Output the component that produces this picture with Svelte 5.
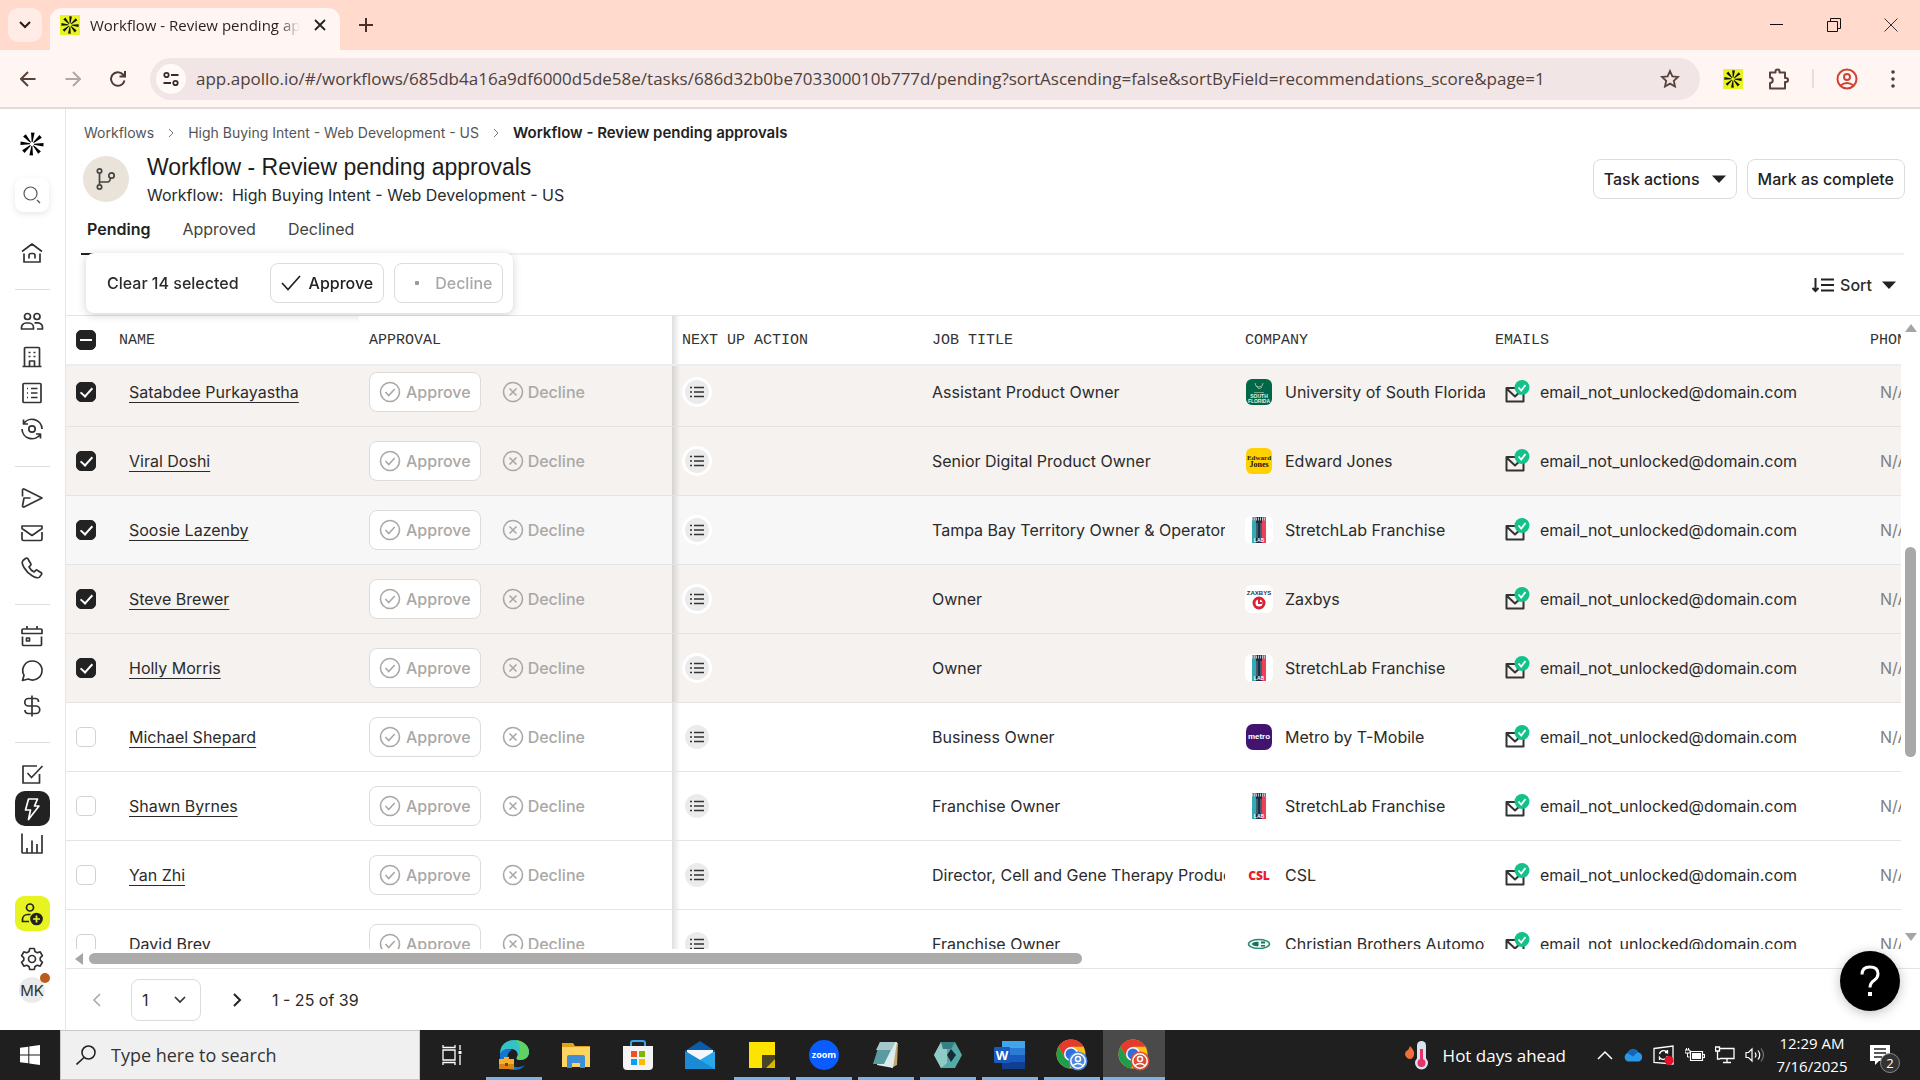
<script>
  import { onMount } from 'svelte';

  let scroller = $state();

  const url = 'app.apollo.io/#/workflows/685db4a16a9df6000d5de58e/tasks/686d32b0be703300010b777d/pending?sortAscending=false&sortByField=recommendations_score&page=1';

  const navGroups = [
    ['people', 'building', 'list', 'sync'],
    ['send', 'mail', 'phone'],
    ['calendar', 'chat', 'dollar'],
    ['tasks', 'bolt', 'chart']
  ];

  // stroke paths, 24x24
  const icons = {
    home: 'M2 10.500 12 3l10 7.500M4 12.500v8.500h16v-8.500M9 17.500V14.500a2 2 0 0 1 2-2h2a2 2 0 0 1 2 2v3',
    people: 'M7.500 10.500a3 3 0 1 0 0-6 3 3 0 0 0 0 6ZM17 10.500a3 3 0 1 0 0-6 3 3 0 0 0 0 6ZM1.500 20h12v-1.500a4.500 4.500 0 0 0-4.500-4.500H6a4.500 4.500 0 0 0-4.500 4.500ZM14.500 13.800h3.500a4.500 4.500 0 0 1 4.500 4.500V20H17',
    building: 'M2.500 21.500h19M4.500 21.500v-18a1 1 0 0 1 1-1h13a1 1 0 0 1 1 1v18M9.500 21.500v-5.500h5v5.500M8.500 7.500h2M13.500 7.500h2M8.500 11.500h2M13.500 11.500h2',
    list: 'M4 2.500h16a1 1 0 0 1 1 1v17a1 1 0 0 1-1 1H4a1 1 0 0 1-1-1v-17a1 1 0 0 1 1-1ZM7 7.500h1M11 7.500h6.500M7 12h1M11 12h6.500M7 16.500h1M11 16.500h6.500',
    sync: 'M12 15.200a3.200 3.200 0 1 0 0-6.400 3.200 3.200 0 0 0 0 6.400ZM3.500 2.500v4.500H8M3.500 7a10 10 0 0 1 18.500 5M20.500 21.500V17H16M20.500 17A10 10 0 0 1 2 12',
    send: 'M2.500 10.500V4a1 1 0 0 1 1.500-.900L22 12 4 20.900A1 1 0 0 1 2.500 20l1.500-8h6.500',
    mail: 'M2 7.500V5h20v2.500L12 14.500 2 7.500ZM2 11v7a1.500 1.500 0 0 0 1.500 1.500h17A1.500 1.500 0 0 0 22 18v-7',
    phone: 'M5.500 2.500 3 4.500c-1 1-1 3.500 1 7 2 3.500 5 6.500 8.500 8.500 3.500 2 6 2 7 1l2-2.500a1.200 1.200 0 0 0-.300-1.700l-4-2.600a1.200 1.200 0 0 0-1.500.200l-1.500 1.600c-2.200-1-4.200-3-5.200-5.200l1.600-1.500a1.200 1.200 0 0 0 .200-1.500L8 3a1.500 1.500 0 0 0-2.500-.500Z',
    calendar: 'M2 9.500V6a1 1 0 0 1 1-1h18a1 1 0 0 1 1 1v3.500ZM7 5V2M17 5V2M2.500 12.500v8a1 1 0 0 0 1 1h17a1 1 0 0 0 1-1v-8M6.500 14h3v3h-3Z',
    chat: 'M12.500 2a9.500 9.500 0 1 1-4.200 18L2.500 21.500 4 16.200A9.500 9.500 0 0 1 12.500 2Z',
    dollar: 'M12 1.500v21M18.500 8V7.500a3 3 0 0 0-3-3h-7a3.700 3.700 0 0 0 0 7.500h7.500a3.700 3.700 0 0 1 0 7.500h-8a3 3 0 0 1-3-3V16',
    tasks: 'M17 4H3v17h16.500V12M7.500 11l4 4.500L22.500 4',
    bolt: 'M8.500 2h9l-3 7h4.500L8.500 22.500l2-9.500H5.500Z',
    chart: 'M2 1.500v18.500a1 1 0 0 0 1 1h19V3M7 21v-5M12 21V8.500M17 21v-9'
  };

  const rows = [
    { name: 'Satabdee Purkayastha', title: 'Assistant Product Owner', company: 'University of South Florida', logo: 'usf', selected: true },
    { name: 'Viral Doshi', title: 'Senior Digital Product Owner', company: 'Edward Jones', logo: 'edward', selected: true },
    { name: 'Soosie Lazenby', title: 'Tampa Bay Territory Owner & Operator', company: 'StretchLab Franchise', logo: 'stretch', selected: true, hovered: true },
    { name: 'Steve Brewer', title: 'Owner', company: 'Zaxbys', logo: 'zaxbys', selected: true },
    { name: 'Holly Morris', title: 'Owner', company: 'StretchLab Franchise', logo: 'stretch', selected: true },
    { name: 'Michael Shepard', title: 'Business Owner', company: 'Metro by T-Mobile', logo: 'metro' },
    { name: 'Shawn Byrnes', title: 'Franchise Owner', company: 'StretchLab Franchise', logo: 'stretch' },
    { name: 'Yan Zhi', title: 'Director, Cell and Gene Therapy Product', company: 'CSL', logo: 'csl' },
    { name: 'David Brey', title: 'Franchise Owner', company: 'Christian Brothers Automotive', logo: 'cba' }
  ];

  const apps = [
    { id: 'edge', open: true },
    { id: 'explorer' },
    { id: 'store' },
    { id: 'mailapp' },
    { id: 'sticky', open: true },
    { id: 'zoom', open: true },
    { id: 'notepad', open: true },
    { id: 'hex', open: true },
    { id: 'word', open: true },
    { id: 'chrome', open: true },
    { id: 'chrome2', open: true, active: true }
  ];

  onMount(() => {
    scroller.scrollTop = 8;
  });
</script>

{#snippet burst(size)}
  <svg width={size} height={size} viewBox="0 0 24 24" fill="currentColor" aria-hidden="true">
    {#each [0, 45, 90, 135, 180, 225, 270, 315] as angle}
      <path d="M10.200.500h3.600l-1.300 9.500h-1Z" transform="rotate({angle + 4} 12 12)" />
    {/each}
  </svg>
{/snippet}

{#snippet icon(name, size = 24)}
  <svg width={size} height={size} viewBox="0 0 24 24" fill="none" stroke="currentColor" stroke-width="1.700" stroke-linejoin="round" aria-hidden="true">
    <path d={icons[name]} />
  </svg>
{/snippet}

{#snippet caret()}
  <svg width="14" height="8" viewBox="0 0 14 8" aria-hidden="true"><path d="M0 .5h14L7 8Z" fill="#222" /></svg>
{/snippet}

{#snippet logo(name)}
  <svg class="logo" width="28" height="28" viewBox="0 0 28 28" aria-hidden="true">
    {#if name === 'usf'}
      <rect x="1" y="1" width="26" height="26" rx="6" fill="#006747" />
      <path d="M10 5q0 4 4 4t4-4M11 8l3 3 3-2" fill="none" stroke="#8fb5a3" />
      <path d="M9 14.500h10" stroke="#6fa58d" />
      <text x="14" y="20" class="tiny" fill="#e5efe9">SOUTH</text>
      <text x="14" y="25" class="tiny" fill="#e5efe9">FLORIDA</text>
    {:else if name === 'edward'}
      <rect x="1" y="1" width="26" height="26" rx="6" fill="#ffd100" />
      <text x="14" y="13" class="serif" fill="#222">Edward</text>
      <text x="14" y="20" class="serif heavy" fill="#111">Jones</text>
    {:else if name === 'stretch'}
      <rect width="28" height="28" rx="6" fill="#fff" />
      <path d="M7 1h4v26H7Z" fill="#35a9b5" />
      <path d="M11 1h6v26h-6Z" fill="#183041" />
      <path d="M17 1h4v26h-4Z" fill="#ee4056" />
      <path d="M7 3h14" stroke="#b9c4ca" stroke-width="3" stroke-dasharray="1 1" />
      <path d="M12 7v15M16 7v15" stroke="#718c9b" />
      <text x="14" y="26" class="tiny" fill="#fff">LAB</text>
    {:else if name === 'zaxbys'}
      <rect width="28" height="28" rx="6" fill="#fff" />
      <text x="14" y="10" class="small" fill="#17345b">ZAXBYS</text>
      <circle cx="14" cy="18" r="5" fill="none" stroke="#dc2036" stroke-width="3" />
      <path d="M14 12v6h3" fill="none" stroke="#dc2036" stroke-width="2" />
    {:else if name === 'metro'}
      <rect x="1" y="1" width="26" height="26" rx="7" fill="#43146f" />
      <text x="14" y="16" class="brand" fill="#fff">metro</text>
    {:else if name === 'csl'}
      <text x="14" y="19" class="csl" fill="#e9202c">CSL</text>
    {:else}
      <ellipse cx="14" cy="14" rx="10.500" ry="4.500" fill="#eef7f3" stroke="#2b8a72" stroke-width="1.500" />
      <path d="M6.500 14q3-3 7-2v4q-4 1-7-2ZM16 11.500h4v2h-4ZM16 15h4v1.500h-4Z" fill="#17725a" />
    {/if}
  </svg>
{/snippet}

{#snippet chromeMark(badge)}
  <svg width="34" height="32" viewBox="0 0 34 32">
    <circle cx="16" cy="15" r="14.500" fill="#fbc116" />
    <path d="M3.400 7.800A14.500 14.500 0 0 1 28.600 7.800H16L9.700 18.600Z" fill="#e33b2e" />
    <path d="M3.400 7.800 9.700 18.600 16 22l-1.500 7.400A14.500 14.500 0 0 1 3.400 7.800Z" fill="#1e9e4a" />
    <circle cx="16" cy="15" r="7" fill="#fff" />
    <circle cx="16" cy="15" r="5.500" fill="#2c6fe0" />
    <circle cx="23" cy="22" r="9.500" fill={badge} />
    <circle cx="23" cy="22" r="7.200" fill="none" stroke="#fff" stroke-width="1.500" />
    <circle cx="23" cy="20" r="2.500" fill="none" stroke="#fff" stroke-width="1.500" />
    <path d="M18 26.500q5-4 10 0" fill="none" stroke="#fff" stroke-width="1.500" />
  </svg>
{/snippet}

{#snippet appIcon(id)}
  {#if id === 'edge'}
    <svg width="32" height="32" viewBox="0 0 32 32">
      <path d="M2 15C2 6 8 1 16 1s15 5 15 12c0 5-4 8-9 8-3 0-4-1-3-3 2-4-1-8-6-8S4 12 2 15Z" fill="#35c1c8" />
      <path d="M18 1c8 1 13 6 13 12 0 5-4 8-9 8-3 0-4-1-3-3 5-5 3-12-1-17Z" fill="#5ed363" />
      <path d="M2 15c2-5 8-6 12-4-5 2-6 9-2 14 4 4 10 4 15 1-3 4-7 5-11 5C7 31 1 24 2 15Z" fill="#1673cf" />
      <path d="M1 20h15v10H1Z" fill="#d98310" />
      <path d="M1 20h15v5H1ZM6 18h5v2H6Z" fill="#f6ae2d" />
      <path d="M7 24h3v3H7Z" fill="#7e4706" />
    </svg>
  {:else if id === 'explorer'}
    <svg width="30" height="28" viewBox="0 0 30 28">
      <path d="M1 2h11l2 3h15v6H1Z" fill="#e0a31f" />
      <path d="M1 6h28v20H1Z" fill="#fdd462" />
      <path d="M6 16q0-2 2-2h14q2 0 2 2v11h-5v-5h-8v5H6Z" fill="#3f8fd8" />
    </svg>
  {:else if id === 'store'}
    <svg width="32" height="32" viewBox="0 0 32 32">
      <path d="M9 8V4q0-2 2-2h10q2 0 2 2v4" fill="none" stroke="#35a7e8" stroke-width="2" />
      <path d="M1 7h30v20q0 4-4 4H5q-4 0-4-4Z" fill="#f4f4f7" />
      <path d="M9 12h6v6H9Z" fill="#f25022" /><path d="M17 12h6v6h-6Z" fill="#7fba00" />
      <path d="M9 20h6v6H9Z" fill="#00a4ef" /><path d="M17 20h6v6h-6Z" fill="#ffb900" />
    </svg>
  {:else if id === 'mailapp'}
    <svg width="32" height="30" viewBox="0 0 32 30">
      <path d="M1 11 16 1l15 10Z" fill="#0b5cab" />
      <path d="M3 10h26v10H3Z" fill="#f3f6fa" />
      <path d="M1 11l15 9 15-9v18H1Z" fill="#28a8ea" />
      <path d="M1 11 31 29H1Z" fill="#1c8bd6" />
    </svg>
  {:else if id === 'sticky'}
    <svg width="28" height="28" viewBox="0 0 28 28">
      <path d="M1 1h26v15L16 27H1Z" fill="#fde300" />
      <path d="M14 14h13v4l-9 9h-4Z" fill="#4b4526" />
      <path d="M27 18v9h-9Z" fill="#d5b800" />
    </svg>
  {:else if id === 'zoom'}
    <svg width="32" height="32" viewBox="0 0 32 32">
      <circle cx="16" cy="16" r="15" fill="#0b5cff" />
      <text x="16" y="19" class="zoomtext" fill="#fff">zoom</text>
    </svg>
  {:else if id === 'notepad'}
    <svg width="32" height="30" viewBox="0 0 32 30">
      <path d="M20 3h8l-1 22-6 3Z" fill="#c3a36b" />
      <path d="M10 2h17l-4 26-16-3Z" fill="#dcebeb" />
      <path d="M10 2h15L14 24H3Z" fill="#5a9ba0" />
      <path d="M10 2h15l-4 8H6Z" fill="#a5c9cb" />
    </svg>
  {:else if id === 'hex'}
    <svg width="30" height="28" viewBox="0 0 30 28">
      <path d="M8 1h14l7 13-7 13H8L1 14Z" fill="#55a9a8" />
      <path d="M8 1 1 14l7 13 6-5V7Z" fill="#8fcac6" />
      <path d="M8 1h14l-4 7h-8Z" fill="#377f82" />
      <path d="m18 8 5 6-5 7-4-7Z" fill="#172a35" />
    </svg>
  {:else if id === 'word'}
    <svg width="32" height="28" viewBox="0 0 32 28">
      <path d="M8 0h23v7H8Z" fill="#41a5ee" /><path d="M8 7h23v7H8Z" fill="#2b7cd3" />
      <path d="M8 14h23v7H8Z" fill="#185abd" /><path d="M8 21h23v7H8Z" fill="#103f91" />
      <rect y="6" width="16" height="16" rx="1" fill="#185abd" />
      <text x="8" y="19" class="word" fill="#fff">W</text>
    </svg>
  {:else if id === 'chrome'}
    {@render chromeMark('#4c86dd')}
  {:else}
    {@render chromeMark('#dc4c33')}
  {/if}
{/snippet}

<div class="screen">
  <header class="tabstrip">
    <button class="tab-search" aria-label="Search tabs">
      <svg width="12" height="8" viewBox="0 0 12 8"><path d="m1 1 5 5 5-5" fill="none" stroke="#2a1a17" stroke-width="2" /></svg>
    </button>
    <div class="browser-tab">
      <span class="favicon">{@render burst(18)}</span>
      <span class="tab-title">Workflow - Review pending approvals</span>
      <button class="plain" aria-label="Close tab">
        <svg width="12" height="12" viewBox="0 0 12 12"><path d="m1 1 10 10M11 1 1 11" stroke="#222" stroke-width="1.800" /></svg>
      </button>
    </div>
    <button class="plain new-tab" aria-label="New tab">
      <svg width="14" height="14" viewBox="0 0 14 14"><path d="M7 0v14M0 7h14" stroke="#4d2f29" stroke-width="2" /></svg>
    </button>
    <div class="window-buttons">
      <button class="plain" aria-label="Minimize"><svg width="14" height="14" viewBox="0 0 14 14"><path d="M0 6.500h13" stroke="#111" /></svg></button>
      <button class="plain" aria-label="Restore"><svg width="14" height="14" viewBox="0 0 14 14" fill="none" stroke="#111"><path d="M.500 3.500h10v10H.500ZM3.500 3V.500h10v10H11" /></svg></button>
      <button class="plain" aria-label="Close"><svg width="14" height="14" viewBox="0 0 14 14"><path d="m.500.500 13 13M13.500.500l-13 13" stroke="#333" /></svg></button>
    </div>
  </header>

  <div class="addressbar">
    <button class="plain nav-btn" aria-label="Back"><svg width="16" height="16" viewBox="0 0 16 16" fill="none" stroke="#5b413c" stroke-width="2"><path d="M15.500 8H1.500M8 1 1 8l7 7" /></svg></button>
    <button class="plain nav-btn" aria-label="Forward"><svg width="16" height="16" viewBox="0 0 16 16" fill="none" stroke="#b3a6a4" stroke-width="2"><path d="M.500 8h14M8 1l7 7-7 7" /></svg></button>
    <button class="plain nav-btn" aria-label="Reload"><svg width="16" height="16" viewBox="0 0 16 16" fill="none" stroke="#4f3833" stroke-width="2"><path d="M14.500 9.500A6.800 6.800 0 1 1 13 3.500l2 2M15 0v5.500H9.500" /></svg></button>
    <div class="omnibox">
      <button class="site-info" aria-label="Site information">
        <svg width="16" height="16" viewBox="0 0 16 16" fill="none" stroke="#3c2b28" stroke-width="1.800"><circle cx="3.500" cy="4" r="2.200" /><path d="M8 4h7.500M.500 12H8" /><circle cx="12.500" cy="12" r="2.200" /></svg>
      </button>
      <input class="url" type="text" value={url} aria-label="Address" />
      <button class="plain" aria-label="Bookmark">
        <svg width="20" height="20" viewBox="0 0 20 20"><path d="m10 2 2.400 5.300 5.600.600-4.200 3.900 1.200 5.700-5-2.900-5 2.900 1.200-5.700L2 7.900l5.600-.600Z" fill="none" stroke="#5b413c" stroke-width="1.800" /></svg>
      </button>
    </div>
    <div class="extensions">
      <button class="plain" aria-label="Apollo extension"><span class="favicon">{@render burst(18)}</span></button>
      <button class="plain puzzle" aria-label="Extensions">
        <svg width="22" height="22" viewBox="0 0 22 22"><path d="M2 4.500h5.500V3.500a2 2 0 0 1 4 0v1H17V10h1a2 2 0 0 1 0 4h-1v6.500H2V15a2.700 2.700 0 0 0 0-5.500Z" fill="none" stroke="#5b413c" stroke-width="2" stroke-linejoin="round" /></svg>
      </button>
      <span class="separator"></span>
      <button class="plain" aria-label="Profile">
        <svg width="22" height="22" viewBox="0 0 22 22" fill="none" stroke="#cf4130" stroke-width="2"><circle cx="11" cy="11" r="9.500" /><circle cx="11" cy="9" r="3" /><path d="M4.500 17.500q6.500-5 13 0" /></svg>
      </button>
      <button class="plain menu" aria-label="Menu">
        <svg width="6" height="18" viewBox="0 0 6 18" fill="#4f3833"><circle cx="3" cy="2" r="1.800" /><circle cx="3" cy="9" r="1.800" /><circle cx="3" cy="16" r="1.800" /></svg>
      </button>
    </div>
  </div>

  <div class="app">
    <nav class="sidebar">
      <a href="#home" class="brand-mark" aria-label="Apollo">{@render burst(24)}</a>
      <button class="side-search" aria-label="Search">
        <svg width="18" height="18" viewBox="0 0 18 18" fill="none" stroke="#555" stroke-width="1.200"><circle cx="7.500" cy="7.500" r="6.500" /><path d="m14 14 3 3" /></svg>
      </button>
      <a href="#home" class="side-item home" aria-label="Home">{@render icon('home')}</a>
      {#each navGroups as group}
        <div class="nav-group">
          {#each group as item}
            <a href="#{item}" class="side-item" class:current={item === 'bolt'} aria-label={item}>
              {@render icon(item)}
            </a>
          {/each}
        </div>
      {/each}
      <div class="side-bottom">
        <button class="invite" aria-label="Invite teammates">
          <svg width="22" height="24" viewBox="0 0 22 24" fill="none" stroke="#222" stroke-width="1.700"><circle cx="9" cy="5.500" r="3.500" /><path d="M8 19.500H1.500V17a5 5 0 0 1 5-4.500h3" /><circle cx="15.500" cy="17" r="5.500" fill="#222" /><path d="M15.500 13.500v7M12 17h7" stroke="#e8f421" /></svg>
        </button>
        <button class="plain gear" aria-label="Settings">
          <svg width="24" height="24" viewBox="0 0 24 24" fill="none" stroke="#333" stroke-width="1.700" stroke-linejoin="round"><path d="M9.800 1.500h4.400l.800 3 2.200 1.200 3-.800 2.200 3.800-2.200 2.200v2.200l2.200 2.200-2.200 3.800-3-.800-2.200 1.200-.800 3H9.800l-.800-3-2.200-1.200-3 .800-2.200-3.800 2.200-2.200v-2.200L1.600 8.700l2.200-3.800 3 .800L9 4.500Z" /><circle cx="12" cy="12" r="3.500" /></svg>
        </button>
        <button class="avatar">MK<span class="dot"></span></button>
      </div>
    </nav>

    <main>
      <div class="crumbs">
        <a href="#workflows">Workflows</a>
        <svg width="6" height="10" viewBox="0 0 6 10"><path d="m1 1 4 4-4 4" fill="none" stroke="#777" /></svg>
        <a href="#intent">High Buying Intent - Web Development - US</a>
        <svg width="6" height="10" viewBox="0 0 6 10"><path d="m1 1 4 4-4 4" fill="none" stroke="#777" /></svg>
        <b>Workflow - Review pending approvals</b>
      </div>

      <div class="page-head">
        <span class="workflow-icon">
          <svg width="22" height="24" viewBox="0 0 22 24" fill="none" stroke="#444" stroke-width="1.700"><circle cx="4.500" cy="4" r="2.200" /><circle cx="4.500" cy="20" r="2.200" /><circle cx="16.500" cy="8.500" r="2.700" /><path d="M4.500 6.500v11M4.500 15h8q2.500 0 3-4" /></svg>
        </span>
        <div class="titles">
          <h1>Workflow - Review pending approvals</h1>
          <p>Workflow: <span>High Buying Intent - Web Development - US</span></p>
        </div>
        <button class="btn">Task actions {@render caret()}</button>
        <button class="btn">Mark as complete</button>
      </div>

      <div class="tabs">
        <a href="#pending" class="active">Pending</a>
        <a href="#approved">Approved</a>
        <a href="#declined">Declined</a>
      </div>

      <div class="toolbar">
        <div class="bulk">
          <button class="plain clear">Clear 14 selected</button>
          <button class="btn">
            <svg width="20" height="16" viewBox="0 0 20 16"><path d="m1 8 6 6.500L19 1" fill="none" stroke="#222" stroke-width="1.700" /></svg>
            Approve
          </button>
          <button class="btn muted"><span class="bullet"></span>Decline</button>
        </div>
        <button class="plain sort">
          <svg width="22" height="16" viewBox="0 0 22 16" fill="none" stroke="#222" stroke-width="2"><path d="M3.500 1v12M.500 11l3 3 3-3M9 2.500h13M9 8h13M9 13.500h13" /></svg>
          Sort {@render caret()}
        </button>
      </div>

      <div class="grid-area">
        <div class="scroller" bind:this={scroller}>
          <table>
            <colgroup>
              <col class="c-check" /><col class="c-md" /><col class="c-lg" /><col class="c-md" /><col class="c-lg" /><col class="c-md" /><col class="c-xl" /><col class="c-md" />
            </colgroup>
            <thead>
              <tr>
                <th class="check"><input type="checkbox" indeterminate={true} aria-label="Select all" /></th>
                <th>NAME</th>
                <th class="edge">APPROVAL</th>
                <th>NEXT UP ACTION</th>
                <th>JOB TITLE</th>
                <th>COMPANY</th>
                <th>EMAILS</th>
                <th>PHONE</th>
              </tr>
            </thead>
            <tbody>
              {#each rows as row}
                <tr class:selected={row.selected} class:hovered={row.hovered}>
                  <td class="check"><input type="checkbox" checked={row.selected} aria-label="Select {row.name}" /></td>
                  <td class="name"><a href="#contact">{row.name}</a></td>
                  <td class="edge">
                    <div class="approval">
                      <button class="btn muted">
                        <svg width="22" height="22" viewBox="0 0 22 22" fill="none" stroke="#aaa8a6" stroke-width="1.600"><circle cx="11" cy="11" r="9.500" /><path d="m6.500 11 3.200 3.500 6-6.500" /></svg>
                        Approve
                      </button>
                      <button class="plain muted">
                        <svg width="22" height="22" viewBox="0 0 22 22" fill="none" stroke="#aaa8a6" stroke-width="1.600"><circle cx="11" cy="11" r="9.500" /><path d="m7.500 7.500 7 7M14.500 7.500l-7 7" /></svg>
                        Decline
                      </button>
                    </div>
                  </td>
                  <td>
                    <span class="next">
                      <svg width="14" height="12" viewBox="0 0 14 12" stroke="#333" stroke-width="1.300"><path d="M0 1.500h2M4 1.500h10M0 6h2M4 6h10M0 10.500h2M4 10.500h10" /></svg>
                    </span>
                  </td>
                  <td><div class="clip">{row.title}</div></td>
                  <td class="company">
                    <div class="clip with-icon">{@render logo(row.logo)}<span>{row.company}</span></div>
                  </td>
                  <td class="email">
                    <div class="with-icon">
                      <svg width="25" height="24" viewBox="0 0 25 24"><path d="M1.500 8h17v13.500h-17ZM1.500 8.500l8.500 8 8.500-8" fill="none" stroke="#333" stroke-width="2" stroke-linejoin="round" /><circle cx="17" cy="7.500" r="7.500" fill="#13c28b" /><path d="m13.500 7.500 2.700 3 4.300-5.500" fill="none" stroke="#fff" stroke-width="1.800" /></svg>
                      <span>email_not_unlocked@domain.com</span>
                    </div>
                  </td>
                  <td class="phone">N/A</td>
                </tr>
              {/each}
            </tbody>
          </table>
        </div>
        <div class="vbar">
          <svg width="12" height="8" viewBox="0 0 12 8"><path d="M0 8 6 0l6 8Z" fill="#a5a5a5" /></svg>
          <div class="vtrack"><div class="vthumb"></div></div>
          <svg width="12" height="8" viewBox="0 0 12 8"><path d="M0 0h12L6 8Z" fill="#a5a5a5" /></svg>
        </div>
      </div>
      <div class="hbar">
        <svg width="8" height="12" viewBox="0 0 8 12"><path d="M8 0v12L0 6Z" fill="#a5a5a5" /></svg>
        <div class="htrack"><div class="hthumb"></div></div>
        <svg width="8" height="12" viewBox="0 0 8 12"><path d="M0 0v12l8-6Z" fill="#8a8a8a" /></svg>
      </div>

      <footer class="pager">
        <button class="plain" aria-label="Previous page"><svg width="9" height="14" viewBox="0 0 9 14"><path d="M8 1 2 7l6 6" fill="none" stroke="#aaa" stroke-width="1.600" /></svg></button>
        <div class="page-select">
          <select aria-label="Page"><option>1</option><option>2</option></select>
          <svg width="12" height="8" viewBox="0 0 12 8"><path d="m1 1 5 5 5-5" fill="none" stroke="#333" stroke-width="1.700" /></svg>
        </div>
        <button class="plain" aria-label="Next page"><svg width="9" height="14" viewBox="0 0 9 14"><path d="m1 1 6 6-6 6" fill="none" stroke="#222" stroke-width="2" /></svg></button>
        <span class="range">1 - 25 of 39</span>
      </footer>
      <button class="help" aria-label="Help">
        <svg width="20" height="32" viewBox="0 0 20 32" fill="none" stroke="#fff" stroke-width="3"><path d="M2 9.500Q2 2 9.700 2 18 2 18 8.800q0 3.700-3.700 6.400-4.300 3-4.300 7.300" /><path d="M10 27v4" stroke-width="4" /></svg>
      </button>
    </main>
  </div>

  <div class="taskbar">
    <button class="plain start" aria-label="Start">
      <svg width="20" height="20" viewBox="0 0 20 20" fill="#fff"><path d="m0 2.800 8.300-1.100v7.800H0ZM9.300 1.500 20 0v9.500H9.300ZM0 10.500h8.300v7.800L0 17.200ZM9.300 10.500H20V20L9.300 18.500Z" /></svg>
    </button>
    <label class="taskbar-search">
      <svg width="20" height="20" viewBox="0 0 20 20" fill="none" stroke="#222" stroke-width="1.600"><circle cx="12.500" cy="7.500" r="6.500" /><path d="M8 12.500.500 19.500" /></svg>
      <input type="text" placeholder="Type here to search" aria-label="Type here to search" />
    </label>
    <button class="plain task-view" aria-label="Task view">
      <svg width="20" height="20" viewBox="0 0 20 20" fill="none" stroke="#fff" stroke-width="1.300"><path d="M1 5h12v10H1ZM1 0v2.500h12V0M1 20v-2.500h12V20M18 0v5M18 10v10" /><path d="M16.500 7.500h3" stroke-width="3" /></svg>
    </button>
    {#each apps as app}
      <button class="app-btn" class:open={app.open} class:active={app.active} aria-label={app.id}>{@render appIcon(app.id)}</button>
    {/each}
    <div class="tray">
      <svg width="24" height="30" viewBox="0 0 24 30"><path d="M5 6q5 5 4 9-1 4-4 4t-5-4q0-4 3-5 1-1 2-4Z" fill="#f0703c" /><rect x="12" y="1" width="9" height="24" rx="4.500" fill="#d9e3ee" /><circle cx="16.500" cy="23" r="6.500" fill="#d9e3ee" /><circle cx="16.500" cy="23" r="4" fill="#e2336b" /><path d="M16.500 9v12" stroke="#e2336b" stroke-width="3" /></svg>
      <span class="weather">Hot days ahead</span>
      <svg width="16" height="10" viewBox="0 0 16 10"><path d="m1 9 7-7 7 7" fill="none" stroke="#fff" stroke-width="1.500" /></svg>
      <svg width="20" height="14" viewBox="0 0 20 14"><path d="M5 13.500A4.500 4.500 0 0 1 4.500 5 6 6 0 0 1 15.500 4.500 4.700 4.700 0 0 1 16 13.500Z" fill="#2a97e8" /><path d="M4.500 5A6 6 0 0 1 15 4l-5 4.500Z" fill="#1166b8" /></svg>
      <svg width="22" height="20" viewBox="0 0 22 20" fill="none" stroke="#fff" stroke-width="1.300"><path d="M1 3.500 20 1v18L1 17.500ZM6.500 9a4.500 4.500 0 0 1 8-1.500V5M14.500 7.500H12M14.500 11a4.500 4.500 0 0 1-8 1.500V15" /><circle cx="16" cy="15.500" r="4.500" fill="#e8112d" stroke="none" /></svg>
      <svg width="20" height="14" viewBox="0 0 20 14"><path d="M5.500 3.500h12v9h-12ZM17.500 6.500h2v3h-2Z" fill="none" stroke="#fff" stroke-width="1.200" /><path d="M7 5h9v6H7Z" fill="#fff" /><path d="M0 2h5v3H0ZM1.500 0v2M3.500 0v2M2.500 5v4h2" fill="none" stroke="#fff" /></svg>
      <svg width="20" height="18" viewBox="0 0 20 18" fill="none" stroke="#fff" stroke-width="1.300"><path d="M5 2.500h14v10H5M12 12.500v4M8 16.500h8M.500 1h4v4h-4ZM2.500 5v8H5" /></svg>
      <svg width="20" height="16" viewBox="0 0 20 16" fill="none" stroke="#fff" stroke-width="1.200"><path d="M1 5.500h2.500L7 2v12l-3.500-3.500H1ZM10 5.500q2 2.500 0 5M13 3.500q3.500 4.500 0 9" /><path d="M16 1.500q5 6.500 0 13" stroke="#777" /></svg>
      <div class="clock"><span>12:29 AM</span><span>7/16/2025</span></div>
      <span class="notify">
        <svg width="20" height="20" viewBox="0 0 20 20"><path d="M0 0h20v16H9l-4 4v-4H0Z" fill="#fff" /><path d="M4 4h12M4 8h12M4 12h8" stroke="#222" stroke-width="1.300" /></svg>
        <span class="count">2</span>
      </span>
    </div>
  </div>
</div>

<style>
  :global(body) {
    margin: 0;
    background: #fff;
  }
  .screen {
    display: flex;
    flex-direction: column;
    height: 100vh;
    overflow: hidden;
    font-family: Inter, "Liberation Sans", sans-serif;
    font-size: 16px;
    color: #2b2b2b;
  }
  .screen * {
    box-sizing: border-box;
  }
  svg {
    display: block;
    flex: none;
  }
  button, input, select {
    font: inherit;
    color: inherit;
  }
  a {
    color: inherit;
    text-decoration: none;
  }
  .plain {
    display: flex;
    align-items: center;
    gap: 4px;
    padding: 0;
    border: none;
    background: none;
  }

  /* browser */
  .tabstrip {
    display: flex;
    align-items: flex-end;
    height: 50px;
    flex: none;
    background: #ffdacd;
    font-family: "Open Sans", sans-serif;
  }
  .tab-search {
    width: 34px;
    height: 34px;
    margin: 0 8px 8px;
    display: flex;
    align-items: center;
    justify-content: center;
    border: none;
    border-radius: 10px;
    background: #ffece6;
  }
  .browser-tab {
    display: flex;
    align-items: center;
    width: 290px;
    height: 42px;
    padding: 0 14px 8px 10px;
    border-radius: 12px 12px 0 0;
    background: #fff6f3;
  }
  .favicon {
    display: flex;
    align-items: center;
    justify-content: center;
    width: 20px;
    height: 20px;
    background: #e8f421;
    color: #111;
  }
  .tab-title {
    flex: 1;
    margin: 0 14px 0 10px;
    overflow: hidden;
    white-space: nowrap;
    font-size: 15px;
    line-height: 20px;
    color: #2a1f1d;
    mask-image: linear-gradient(90deg, #000 90%, transparent);
  }
  .new-tab {
    padding: 0 0 18px 19px;
  }
  .window-buttons {
    display: flex;
    gap: 43px;
    margin-left: auto;
    padding: 0 22px 18px 0;
  }
  .addressbar {
    display: flex;
    align-items: center;
    height: 59px;
    flex: none;
    padding: 0 24px 0 20px;
    border-bottom: 2px solid #e3d9d8;
    background: #fff6f3;
  }
  .nav-btn {
    width: 45px;
  }
  .nav-btn:nth-child(3) {
    width: 40px;
  }
  .omnibox {
    display: flex;
    align-items: center;
    flex: 1;
    height: 42px;
    margin-right: 23px;
    padding: 0 20px 0 6px;
    border-radius: 21px;
    background: #f1e6e5;
  }
  .site-info {
    display: flex;
    align-items: center;
    justify-content: center;
    width: 30px;
    height: 30px;
    padding: 0;
    border: none;
    border-radius: 50%;
    background: #fffaf8;
  }
  .url {
    flex: 1;
    margin-left: 10px;
    padding: 0;
    border: none;
    outline: none;
    background: none;
    font-family: "Open Sans", sans-serif;
    font-size: 17px;
    color: #4e403e;
  }
  .extensions {
    display: flex;
    align-items: center;
    gap: 22px;
  }
  .puzzle {
    margin-left: 3px;
  }
  .menu {
    margin-left: 10px;
  }
  .separator {
    width: 2px;
    height: 19px;
    background: #f0dcd7;
  }

  /* app shell */
  .app {
    display: flex;
    flex: 1;
    min-height: 0;
  }
  .sidebar {
    display: flex;
    flex-direction: column;
    align-items: center;
    width: 66px;
    flex: none;
    padding: 23px 1px 0 0;
    border-right: 1px solid #e6e6e6;
    color: #333;
  }
  .brand-mark {
    color: #000;
  }
  .side-search {
    display: flex;
    align-items: center;
    justify-content: center;
    width: 34px;
    height: 34px;
    margin: 22px 0 23px;
    padding: 0;
    border: none;
    border-radius: 8px;
    background: #fff;
    box-shadow: 0 2px 6px rgba(0, 0, 0, 0.1);
  }
  .side-item {
    display: flex;
    align-items: center;
    justify-content: center;
    width: 35px;
    height: 35px;
    border-radius: 10px;
  }
  .home {
    margin-bottom: 19px;
  }
  .nav-group {
    padding: 13px 0 19px;
    border-top: 1px solid #dedede;
  }
  .nav-group:first-of-type .side-item {
    height: 36px;
  }
  .current {
    background: #222;
    color: #fff;
  }
  .side-bottom {
    display: flex;
    flex-direction: column;
    align-items: center;
    margin-top: auto;
    padding-bottom: 27px;
  }
  .invite {
    display: flex;
    align-items: center;
    justify-content: center;
    width: 35px;
    height: 35px;
    padding: 0;
    border: none;
    border-radius: 9px;
    background: #e8f421;
  }
  .gear {
    margin: 16px 0 6px;
  }
  .avatar {
    position: relative;
    display: flex;
    align-items: center;
    justify-content: center;
    width: 26px;
    height: 26px;
    padding: 0;
    border: none;
    border-radius: 50%;
    background: #ebebeb;
    font-size: 15px;
  }
  .dot {
    position: absolute;
    top: -4px;
    right: -5px;
    width: 10px;
    height: 10px;
    border-radius: 50%;
    background: #bb5a1a;
  }

  main {
    position: relative;
    display: flex;
    flex-direction: column;
    flex: 1;
    min-width: 0;
  }
  .crumbs {
    display: flex;
    align-items: center;
    gap: 14px;
    padding: 14px 18px 0;
    font-size: 14px;
    line-height: 20px;
    color: #555;
  }
  .crumbs b {
    font-size: 15px;
    font-weight: 600;
    color: #222;
  }
  .page-head {
    display: flex;
    align-items: center;
    gap: 10px;
    padding: 8px 15px 0 17px;
  }
  .workflow-icon {
    display: flex;
    align-items: center;
    justify-content: center;
    width: 46px;
    height: 46px;
    border-radius: 50%;
    background: #e9e3da;
  }
  .titles {
    flex: 1;
    padding-left: 8px;
  }
  h1 {
    margin: 0;
    font-family: "Liberation Sans", Arial, sans-serif;
    font-size: 23px;
    font-weight: 400;
    line-height: 32px;
    color: #1c1c1c;
  }
  p {
    margin: 0;
    line-height: 24px;
  }
  p span {
    margin-left: 4px;
  }
  .btn {
    display: flex;
    align-items: center;
    gap: 8px;
    height: 40px;
    padding: 0 10px;
    border: 1px solid #dcdcdc;
    border-radius: 8px;
    background: #fff;
    font-weight: 500;
    color: #222;
    white-space: nowrap;
  }
  .page-head .btn {
    gap: 12px;
  }
  .muted {
    color: #aaa8a6;
    font-weight: 500;
  }
  .tabs {
    display: flex;
    gap: 32px;
    margin: 10px 16px 0 15px;
    padding: 0 6px;
    border-bottom: 2px solid #f0f0f0;
    line-height: 24px;
    color: #444;
  }
  .tabs a {
    margin-bottom: -2px;
    padding-bottom: 12px;
  }
  .tabs .active {
    margin-left: -6px;
    margin-right: -6px;
    padding-left: 6px;
    padding-right: 6px;
    border-bottom: 2px solid #222;
    font-weight: 600;
    color: #222;
  }
  .toolbar {
    position: relative;
    display: flex;
    justify-content: flex-end;
    height: 60px;
    padding-right: 24px;
  }
  .bulk {
    position: absolute;
    top: -2px;
    left: 20px;
    z-index: 3;
    display: flex;
    align-items: center;
    gap: 10px;
    height: 60px;
    padding: 0 10px 0 21px;
    border-radius: 8px;
    background: #fff;
    box-shadow: 0 2px 10px rgba(0, 0, 0, 0.18);
  }
  .clear {
    margin-right: 21px;
    font-weight: 500;
  }
  .bullet {
    width: 4px;
    height: 4px;
    margin: 0 8px 0 10px;
    border-radius: 1px;
    background: #999;
  }
  .sort {
    gap: 6px;
    font-weight: 500;
  }
  .sort svg:last-child {
    margin-left: 4px;
  }

  /* table */
  .grid-area {
    display: flex;
    flex: 1;
    min-height: 0;
    border-top: 1px solid #e4e4e4;
  }
  .scroller {
    flex: 1;
    min-width: 0;
    overflow: hidden;
  }
  table {
    width: 2044px;
    table-layout: fixed;
    border-collapse: separate;
    border-spacing: 0;
  }
  .c-check { width: 43px; }
  .c-md { width: 250px; }
  .c-lg { width: 313px; }
  .c-xl { width: 375px; }
  th {
    position: sticky;
    top: 0;
    z-index: 2;
    height: 50px;
    padding: 0 10px;
    border-bottom: 2px solid #ededed;
    background: #fff;
    font-family: "Liberation Mono", monospace;
    font-size: 15px;
    font-weight: 400;
    text-align: left;
    color: #333;
  }
  td {
    height: 69px;
    padding: 0 10px;
    border-bottom: 1px solid #e6e4e2;
    white-space: nowrap;
  }
  .selected td {
    background: #f5f2ef;
  }
  .hovered td {
    background: #f7f7f7;
  }
  .check {
    padding: 0 0 0 10px;
  }
  input[type="checkbox"] {
    appearance: none;
    display: flex;
    align-items: center;
    justify-content: center;
    width: 20px;
    height: 20px;
    margin: 0;
    border: 1px solid #d2d2d2;
    border-radius: 5px;
    background: #fff;
  }
  input[type="checkbox"]:checked, input[type="checkbox"]:indeterminate {
    border-color: #222;
    background: #222;
  }
  input[type="checkbox"]:checked::before {
    content: "";
    width: 5px;
    height: 10px;
    margin-bottom: 3px;
    border: solid #fff;
    border-width: 0 2px 2px 0;
    transform: rotate(42deg);
  }
  input[type="checkbox"]:indeterminate::before {
    content: "";
    width: 12px;
    height: 2px;
    background: #fff;
  }
  .name {
    padding-left: 20px;
  }
  .name a {
    text-decoration: underline;
    text-decoration-thickness: 1px;
    text-underline-offset: 4px;
  }
  td.edge {
    position: relative;
  }
  .edge::after {
    content: "";
    position: absolute;
    z-index: 1;
    top: 0;
    bottom: 0;
    left: 100%;
    width: 8px;
    background: linear-gradient(90deg, rgba(0, 0, 0, 0.13), transparent);
  }
  th.edge {
    z-index: 3;
  }
  .approval {
    display: flex;
    align-items: center;
    gap: 21px;
  }
  .approval .btn {
    gap: 5px;
    padding: 0 9px;
  }
  .next {
    display: flex;
    align-items: center;
    justify-content: center;
    width: 30px;
    height: 30px;
    border: 3px solid #fff;
    border-radius: 50%;
    background: #ebebeb;
  }
  .clip {
    overflow: hidden;
  }
  td.company {
    padding-right: 0;
  }
  .with-icon {
    display: flex;
    align-items: center;
    gap: 12px;
  }
  .email {
    padding-left: 20px;
  }
  .email .with-icon {
    gap: 10px;
  }
  .phone {
    padding-left: 20px;
    color: #808080;
  }
  .logo text {
    font-family: "Liberation Sans", Arial, sans-serif;
    text-anchor: middle;
    font-weight: 700;
  }
  .logo .tiny { font-size: 5px; }
  .logo .small { font-size: 6px; }
  .logo .serif { font-family: "Liberation Serif", serif; font-size: 7px; }
  .logo .heavy { font-size: 8px; }
  .logo .brand { font-size: 8px; }
  .logo .csl { font-family: "Open Sans", sans-serif; font-size: 12px; font-weight: 800; }

  .vbar {
    display: flex;
    flex-direction: column;
    align-items: center;
    width: 19px;
    padding: 8px 0;
  }
  .vtrack {
    flex: 1;
    padding-top: 215px;
  }
  .vthumb {
    width: 11px;
    height: 210px;
    border-radius: 6px;
    background: #a8a8a8;
  }
  .hbar {
    display: flex;
    align-items: center;
    gap: 6px;
    height: 20px;
    padding: 0 29px 0 9px;
    border-bottom: 1px solid #e4e4e4;
  }
  .htrack {
    flex: 1;
  }
  .hthumb {
    width: calc(100% * 5 / 9);
    height: 11px;
    border-radius: 6px;
    background: #adaba9;
  }
  .pager {
    display: flex;
    align-items: center;
    height: 61px;
    padding-left: 26px;
  }
  .page-select {
    position: relative;
    margin: 0 32px 0 30px;
  }
  .page-select select {
    appearance: none;
    width: 70px;
    height: 42px;
    padding: 0 10px;
    border: 1px solid #dcdcdc;
    border-radius: 8px;
    background: #fff;
  }
  .page-select svg {
    position: absolute;
    top: 17px;
    right: 15px;
  }
  .range {
    margin-left: 30px;
  }
  .help {
    position: absolute;
    right: 20px;
    bottom: 19px;
    z-index: 4;
    display: flex;
    align-items: center;
    justify-content: center;
    width: 60px;
    height: 60px;
    padding: 0;
    border: none;
    border-radius: 50%;
    background: #000;
    box-shadow: 0 2px 12px rgba(0, 0, 0, 0.25);
  }

  /* taskbar */
  .taskbar {
    display: flex;
    height: 50px;
    flex: none;
    background: #1f1f1f;
    font-family: "Open Sans", sans-serif;
    color: #fff;
  }
  .start {
    width: 60px;
    justify-content: center;
  }
  .taskbar-search {
    display: flex;
    align-items: center;
    gap: 15px;
    width: 360px;
    padding-left: 15px;
    border: 1px solid #c8c8c8;
    background: #f0f0f0;
  }
  .taskbar-search input {
    width: 280px;
    padding: 0;
    border: none;
    outline: none;
    background: none;
    font-size: 18px;
  }
  .taskbar-search input::placeholder {
    color: #333;
    opacity: 1;
  }
  .task-view {
    width: 63px;
    justify-content: center;
  }
  .app-btn {
    display: flex;
    align-items: center;
    justify-content: center;
    width: 62px;
    padding: 3px 0 0;
    border: none;
    border-bottom: 3px solid transparent;
    background: none;
  }
  .open {
    border-image: linear-gradient(90deg, transparent 9%, #76b5e8 9%, #76b5e8 91%, transparent 91%) 3;
  }
  .app-btn.active {
    border-image: none;
    border-bottom-color: #76b5e8;
    background: #4a4a4a;
  }
  .zoomtext {
    font-size: 9px;
    font-weight: 700;
    text-anchor: middle;
  }
  .word {
    font-size: 13px;
    font-weight: 700;
    text-anchor: middle;
  }
  .tray {
    display: flex;
    align-items: center;
    gap: 10px;
    margin-left: auto;
    padding-right: 20px;
    font-size: 17px;
  }
  .weather {
    margin: 0 21px 0 4px;
  }
  .clock {
    display: flex;
    flex-direction: column;
    align-items: center;
    width: 74px;
    font-size: 15px;
    line-height: 23px;
  }
  .notify {
    position: relative;
    width: 30px;
    margin-left: 11px;
  }
  .count {
    position: absolute;
    top: 8px;
    left: 10px;
    width: 20px;
    height: 20px;
    border: 1px solid #888;
    border-radius: 50%;
    background: #333;
    font-size: 13px;
    line-height: 18px;
    text-align: center;
  }
</style>
